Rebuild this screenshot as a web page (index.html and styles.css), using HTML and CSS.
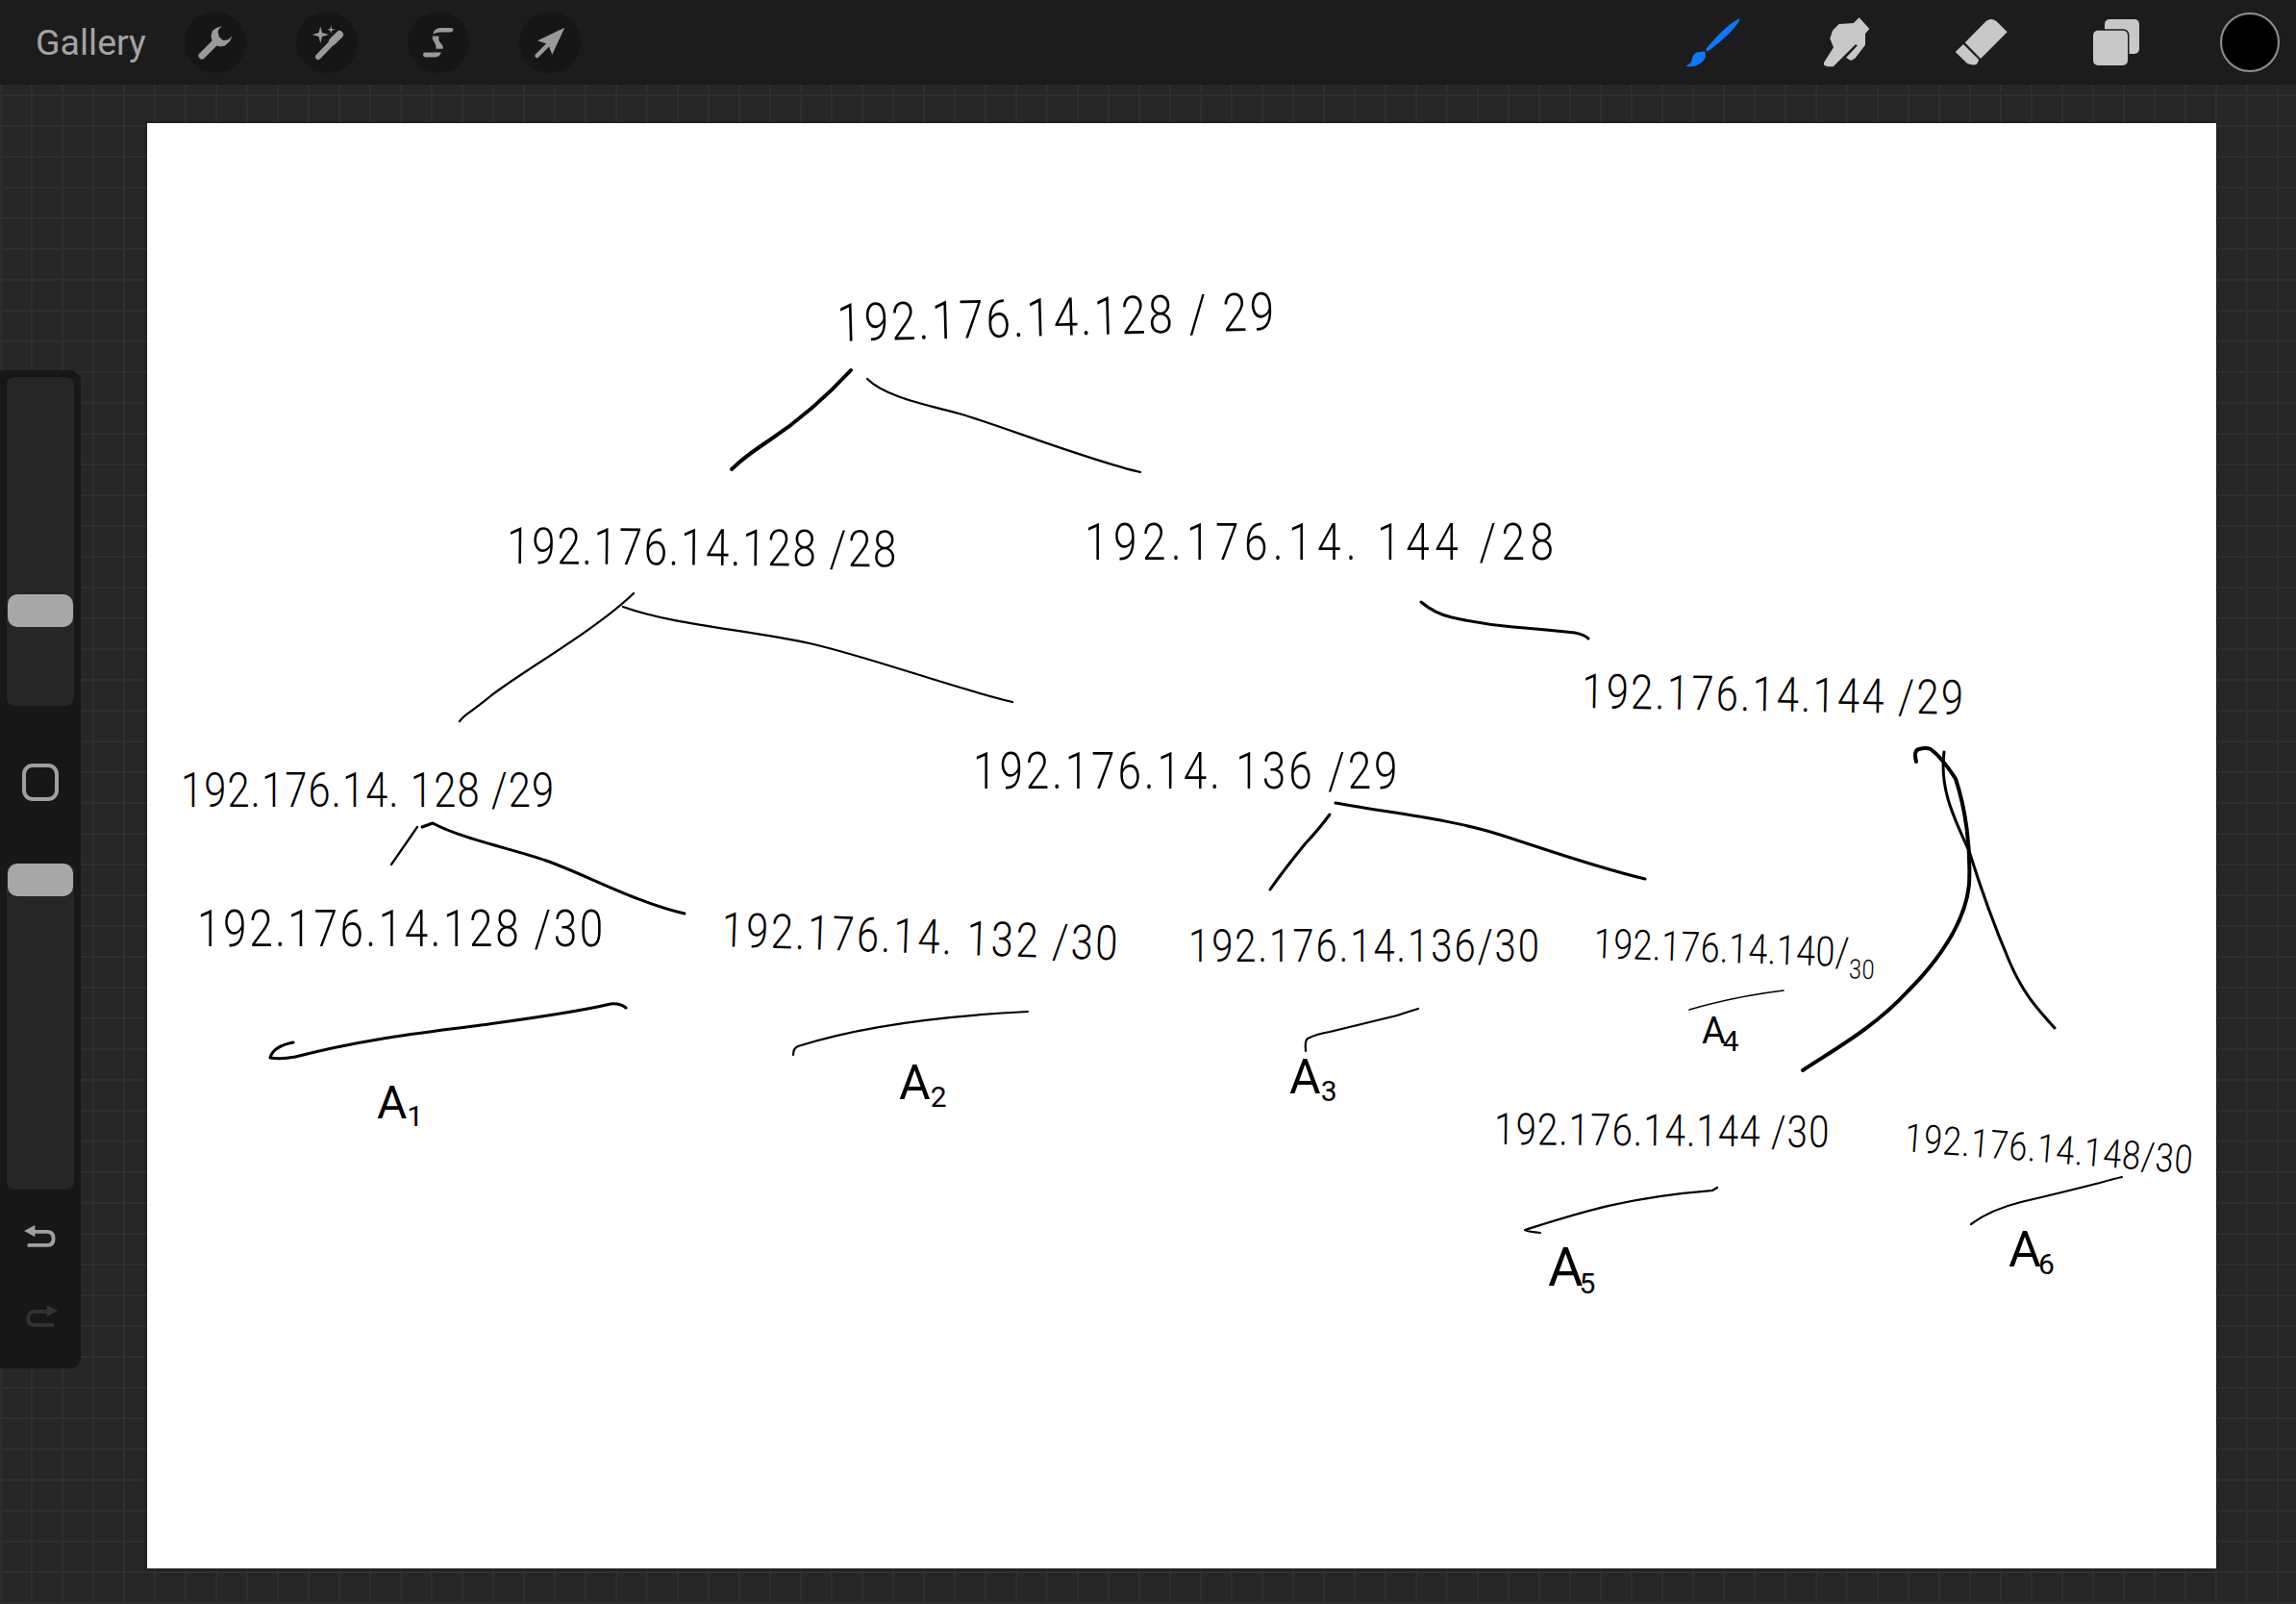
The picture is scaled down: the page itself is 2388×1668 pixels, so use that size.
FILE: index.html
```html
<!DOCTYPE html>
<html lang="en">
<head>
<meta charset="utf-8">
<title>Gallery</title>
<link rel="stylesheet" href="styles.css">
</head>
<body>
<header class="topbar">
  <div class="left-tools">
    <span class="gallery">Gallery</span>
    <div class="round-btns">
      <span class="round"><svg viewBox="0 0 64 64" class="ico"><path d="M18 46 33 31" class="grey-line"/><path d="M38.7 15.3 33 17 29 20 27.5 25 28.5 31 32 35 37 36.5 42 35.5 47 31 49.5 25.5 45 29.5 40 30 36 26.5 34.7 21.5 35.5 18.5Z" class="grey"/></svg></span>
      <span class="round"><svg viewBox="0 0 64 64" class="ico"><path d="M23 47 36 33.5" class="grey-thin"/><path d="M38 31 45 24" class="grey-thick"/><path d="M25.3 15.5 27 22 34 24 27 26 25.3 33 23.5 26 16.8 24 23.5 22ZM36.3 14.5 37.2 18 40.5 18.8 37.2 19.7 36.3 23 35.4 19.7 32.2 18.8 35.4 18Z" class="grey"/></svg></span>
      <span class="round"><svg viewBox="0 0 64 64" class="ico"><path d="M26.5 23.5Q27.5 17 34 17H45Q47.5 17.2 47.5 19T45 21.5H35Q30 21.5 26.5 23.5ZM26 25.5H32.5Q31.5 30 34.5 33T36.7 38.7H29.5Q30 35 27.5 31.5T26 25.5ZM17.7 42.5H35Q33 47.5 28 47.5H18.5Q16 47.3 16 45T17.7 42.5Z" class="grey"/></svg></span>
      <span class="round"><svg viewBox="0 0 64 64" class="ico"><path d="M18.5 46 31 33.5" class="grey-mid"/><path d="M47.3 16.7 19 30.3 30 34 34.3 44.7Z" class="grey"/></svg></span>
    </div>
  </div>
  <div class="right-tools">
    <svg viewBox="0 0 64 64" class="tool"><path d="M25 39.5C33 29 49 12.5 60.5 7 61.3 10.5 49 26 27 41.5Z" class="blue"/><path d="M16 42.5 24.3 41.3 25 47C23.5 51.5 17 57 10 57.3 7.5 57.3 5.5 57.2 4.3 56.7 9 54.5 10.5 52 11 49 11.5 46 13 43.5 16 42.5Z" class="blue"/></svg>
    <svg viewBox="0 0 64 64" class="tool"><path d="M8 53 18 37.3 14.3 28 17 19.7 23.7 13 38.7 12 44.7 6.3 55.3 18 51 23 51 34.7 40.3 48.7 36 51 31 48 42.8 35.5 41 34 17.7 57.3 11.3 57.3 8 55.5Z" class="light"/></svg>
    <svg viewBox="0 0 64 64" class="tool"><path d="M14.7 32.3 37 9.7Q42 6.5 47 9.7L58.7 21.3 31 49Z" class="light"/><path d="M4.7 42 13 34 29.3 50.3 27 54.7Q23 56.5 17 54Z" class="light"/></svg>
    <svg viewBox="0 0 64 64" class="tool"><rect x="20" y="8" width="36" height="36" rx="5" class="light"/><rect x="6.5" y="18.2" width="39" height="39" rx="6" class="gap"/><rect x="8" y="19.7" width="36" height="36.3" rx="5" class="light"/></svg>
    <span class="color-well"></span>
  </div>
</header>

<aside class="sidebar">
  <div class="track track-size"><span class="thumb thumb-size"></span></div>
  <span class="modify"></span>
  <div class="track track-opacity"><span class="thumb"></span></div>
  <div class="history">
    <svg viewBox="0 0 40 32" class="hist hist-undo"><path d="M12 9H27Q35 9 35 17T27 25H6" class="hist-line"/><path d="M0 8 13 1V15Z" class="hist-fill"/></svg>
    <svg viewBox="0 0 40 32" class="hist hist-redo"><path d="M28 9H13Q5 9 5 17T13 25H34" class="hist-line"/><path d="M40 8 27 1V15Z" class="hist-fill"/></svg>
  </div>
</aside>

<main class="workspace">
  <section class="canvas">
    <svg class="ink" viewBox="153 128 2152 1503">
      <path class="s4" d="M885 385C860 412 830 438 800 458S770 480 761 488"/>
      <path class="s2" d="M902 394C920 412 960 420 997 430S1130 478 1186 491"/>
      <path class="s2" d="M659 617C620 655 540 700 510 724S484 742 478 750"/>
      <path class="s2" d="M648 631C700 650 780 655 842 669S990 715 1053 730"/>
      <path class="s2" d="M434 860 407 899"/>
      <path class="s3" d="M439 860 450 856C480 872 530 882 568 895S660 938 712 950"/>
      <path class="s3" d="M305 1084Q284 1088 281 1100 292 1102 307 1099C380 1080 440 1074 500 1066S610 1050 635 1044Q645 1043 651 1048"/>
      <path class="s2" d="M825 1097Q825 1090 830 1088C880 1072 950 1058 1069 1052"/>
      <path class="s3" d="M1478 626Q1492 638 1510 642 1540 649 1574 652 1610 655 1638 658 1648 660 1652 664"/>
      <path class="s3" d="M1383 847Q1372 862 1357 878 1335 905 1321 925"/>
      <path class="s3" d="M1389 835C1450 846 1510 852 1560 868S1660 902 1711 914"/>
      <path class="s2" d="M1358 1093Q1357 1082 1360 1080 1370 1075 1383 1073 1420 1064 1453 1056 1465 1052 1475 1049"/>
      <path class="s1" d="M1757 1050Q1805 1036 1855 1030"/>
      <path class="s4" d="M1993 792Q1990 780 1996 779 2003 777 2008 779 2020 788 2034 810C2044 840 2050 880 2048 920C2044 960 2015 1000 1985 1030C1950 1068 1910 1090 1875 1113"/>
      <path class="s3" d="M2022 782C2017 820 2032 850 2048 885C2062 930 2075 965 2090 1000S2120 1050 2137 1069"/>
      <path class="s2" d="M1602 1282Q1590 1281 1586 1279C1640 1262 1690 1245 1781 1238L1786 1235"/>
      <path class="s2" d="M2050 1273Q2070 1258 2102 1250 2145 1240 2184 1230 2198 1226 2207 1224"/>
    </svg>
    <span class="note n1">192.176.14.128 / 29</span>
    <span class="note n2">192.176.14.128 /28</span>
    <span class="note n3">192.176.14. 144 /28</span>
    <span class="note n4">192.176.14.144 /29</span>
    <span class="note n5">192.176.14. 136 /29</span>
    <span class="note n6">192.176.14. 128 /29</span>
    <span class="note n7">192.176.14.128 /30</span>
    <span class="note n8">192.176.14. 132 /30</span>
    <span class="note n9">192.176.14.136/30</span>
    <span class="note n10">192.176.14.140/<small class="mini">30</small></span>
    <span class="note n11">192.176.14.144 /30</span>
    <span class="note n12">192.176.14.148/30</span>
    <span class="note a1">A<small class="idx">1</small></span>
    <span class="note a2">A<small class="idx">2</small></span>
    <span class="note a3">A<small class="idx">3</small></span>
    <span class="note a4">A<small class="idx">4</small></span>
    <span class="note a5">A<small class="idx">5</small></span>
    <span class="note a6">A<small class="idx">6</small></span>
  </section>
</main>
</body>
</html>
```

FILE: styles.css
```css
* { box-sizing: border-box; }
html, body { height: 100%; }
body {
  margin: 0;
  width: 2388px;
  height: 1668px;
  overflow: hidden;
  display: flex;
  flex-direction: column;
  position: relative;
  font-family: Roboto, "Liberation Sans", sans-serif;
  background-color: #262626;
  background-image:
    linear-gradient(#2e2e2e 0 2px, transparent 2px),
    linear-gradient(90deg, #2e2e2e 0 2px, transparent 2px);
  background-size: 32px 32px;
  background-position: 0 2px, 0 0;
}

/* top bar */
.topbar {
  height: 88px;
  flex: none;
  display: flex;
  justify-content: space-between;
  align-items: center;
  background: #1c1c1c;
  padding: 0 17px 0 37px;
}
.left-tools { display: flex; align-items: center; gap: 41px; }
.gallery { font-size: 37.5px; color: #a3a3a3; width: 114px; white-space: nowrap; }
.round-btns { display: flex; gap: 52px; }
.round {
  width: 64px;
  height: 64px;
  border-radius: 50%;
  background: #161616;
  display: block;
}
.ico { display: block; width: 64px; height: 64px; }
.grey { fill: #9a9a9a; }
.grey-line, .grey-thin, .grey-thick, .grey-mid { fill: none; stroke: #9a9a9a; stroke-linecap: round; }
.grey-line { stroke-width: 7; }
.grey-thin { stroke-width: 6; }
.grey-thick { stroke-width: 8; }
.grey-mid { stroke-width: 4.5; }

.right-tools { display: flex; align-items: center; gap: 76px; }
.tool { display: block; width: 64px; height: 64px; }
.blue { fill: #0a7aff; }
.light { fill: #c8c8c8; }
.gap { fill: #1c1c1c; }
.color-well {
  width: 62px;
  height: 62px;
  border-radius: 50%;
  background: #000;
  border: 2px solid #8f8f8f;
  box-shadow: inset 0 0 0 1px #111;
}

/* left sidebar, floating over the grid */
.sidebar {
  position: absolute;
  left: 0;
  top: 385px;
  width: 84px;
  height: 1038px;
  background: #171717;
  border-radius: 0 12px 12px 0;
  display: flex;
  flex-direction: column;
  align-items: center;
  padding-top: 7px;
}
.track {
  width: 70px;
  background: #262626;
  border-radius: 8px;
  display: flex;
  flex-direction: column;
  align-items: center;
  flex: none;
}
.track-size { height: 342px; padding-top: 226px; }
.track-opacity { height: 339px; margin-top: 65px; }
.thumb {
  width: 68px;
  height: 34px;
  border-radius: 10px;
  background: #a8a8a8;
  display: block;
}
.modify {
  width: 38px;
  height: 39px;
  border: 4px solid #a0a0a0;
  border-radius: 11px;
  margin-top: 60px;
  flex: none;
}
.history { display: flex; flex-direction: column; align-items: center; gap: 55px; margin-top: 36px; }
.hist { display: block; width: 35px; height: 28px; }
.hist-line { fill: none; stroke-width: 4.5; stroke-linecap: round; }
.hist-undo .hist-line { stroke: #a0a0a0; }
.hist-undo .hist-fill { fill: #a0a0a0; }
.hist-redo .hist-line { stroke: #333; }
.hist-redo .hist-fill { fill: #333; }

/* drawing canvas */
.workspace {
  flex: 1;
  padding: 40px 83px 37px 153px;
  display: flex;
}
.canvas {
  flex: 1;
  position: relative;
  background: #fff;
  box-shadow: 0 0 3px rgba(0, 0, 0, .55);
  overflow: hidden;
}
.ink { position: absolute; inset: 0; width: 100%; height: 100%; }
.ink path { fill: none; stroke: #000; stroke-linecap: round; stroke-linejoin: round; }
.s1 { stroke-width: 1.6; }
.s2 { stroke-width: 2.2; }
.s3 { stroke-width: 3; }
.s4 { stroke-width: 4; }

/* handwritten notes: free placement on the canvas */
.note {
  position: absolute;
  color: #000;
  font-weight: 300;
  line-height: 1;
  white-space: pre;
  transform-origin: 0 85%;
}
.n1  { left: 718px;  top: 181px; font-size: 55px; letter-spacing: 3.4px; transform: rotate(-1.5deg) scaleX(.833); }
.n2  { left: 374px;  top: 414px; font-size: 53px; letter-spacing: 1.9px; transform: rotate(.5deg) scaleX(.833); }
.n3  { left: 975px;  top: 410px; font-size: 53px; letter-spacing: 6.6px; transform: scaleX(.833); }
.n4  { left: 1492px; top: 566px; font-size: 50px; letter-spacing: 2.8px; transform: rotate(1deg) scaleX(.833); }
.n5  { left: 859px;  top: 648px; font-size: 53px; letter-spacing: 3.5px; transform: scaleX(.833); }
.n6  { left: 35px;   top: 669px; font-size: 50px; letter-spacing: 1.4px; transform: scaleX(.833); }
.n7  { left: 52px;   top: 812px; font-size: 53px; letter-spacing: 3.1px; transform: scaleX(.833); }
.n8  { left: 597px;  top: 814px; font-size: 50px; letter-spacing: 3px; transform: rotate(2deg) scaleX(.833); }
.n9  { left: 1083px; top: 832px; font-size: 48px; letter-spacing: 2.4px; transform: scaleX(.833); }
.n10 { left: 1504px; top: 832px; font-size: 43px; letter-spacing: .6px; transform: rotate(2deg) scaleX(.833); }
.n11 { left: 1401px; top: 1023px; font-size: 46px; letter-spacing: 1.4px; transform: rotate(.5deg) scaleX(.833); }
.n12 { left: 1827px; top: 1035px; font-size: 41px; letter-spacing: 1.2px; transform: rotate(4.5deg) scaleX(.833); }
.mini { font-size: 28px; vertical-align: -12px; }
.idx { font-size: 30px; vertical-align: -8px; }
.a1, .a2, .a3, .a4, .a5, .a6 { font-weight: 400; }
.a1 { left: 239px;  top: 995px;  font-size: 48px; }
.a2 { left: 782px;  top: 973px;  font-size: 50px; }
.a3 { left: 1188px; top: 967px;  font-size: 50px; }
.a4 { left: 1617px; top: 925px;  font-size: 38px; letter-spacing: -3px; }
.a5 { left: 1457px; top: 1162px; font-size: 56px; letter-spacing: -4px; }
.a6 { left: 1936px; top: 1146px; font-size: 52px; letter-spacing: -3px; }
```
